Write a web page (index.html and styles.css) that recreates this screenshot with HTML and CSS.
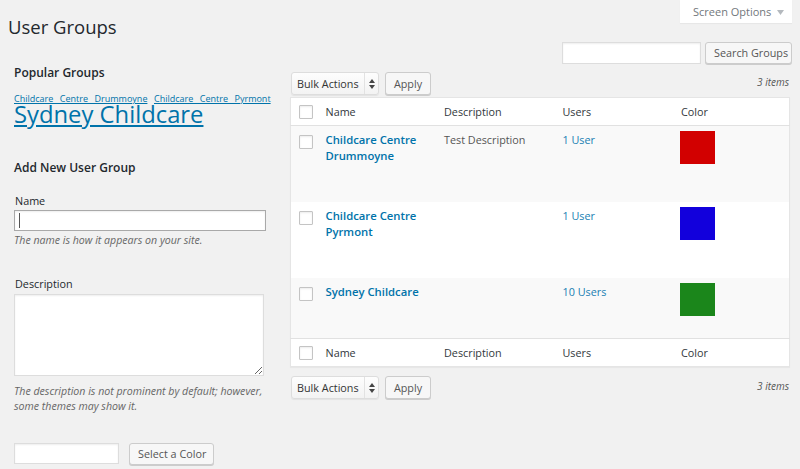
FILE: index.html
```html
<!DOCTYPE html>
<html>
<head>
<meta charset="utf-8">
<title>User Groups</title>
<link rel="stylesheet" href="styles.css">
</head>
<body>
<div class="wrap">
  <a class="screen-options">Screen Options <svg class="so-arrow" width="7" height="5" viewBox="0 0 7 5"><path d="M0 0h7L3.5 5z" fill="#b4b9be"/></svg></a>
  <h1 class="page-title">User Groups</h1>
  <div class="cols">
    <div class="col-left">
      <h2 class="section-title section-popular">Popular Groups</h2>
      <div class="tag-small"><a href="#">Childcare Centre Drummoyne</a> <a href="#">Childcare Centre Pyrmont</a></div>
      <a class="tag-big" href="#">Sydney Childcare</a>

      <h2 class="section-title section-add">Add New User Group</h2>
      <label class="field-label label-name">Name</label>
      <div class="input-wrap">
        <input class="text-input name-input" type="text">
        <span class="caret"></span>
      </div>
      <p class="help help-name">The name is how it appears on your site.</p>

      <label class="field-label label-desc">Description</label>
      <textarea class="desc-input"></textarea>
      <p class="help help-desc">The description is not prominent by default; however, some themes may show it.</p>

      <div class="color-row">
        <input class="text-input color-input" type="text">
        <button class="button">Select a Color</button>
      </div>
    </div>

    <div class="col-right">
      <div class="search-row">
        <input class="text-input search-input" type="text">
        <button class="button search-btn">Search Groups</button>
      </div>

      <div class="tablenav tablenav-top">
        <div class="select">
          <span class="select-label">Bulk Actions</span>
          <span class="select-arrows"><svg width="6" height="10" viewBox="0 0 6 10"><path d="M0 4L3 0l3 4z M0 6h6L3 10z" fill="#444"/></svg></span>
        </div>
        <button class="button apply-btn">Apply</button>
        <span class="items-count">3 items</span>
      </div>

      <table class="list-table">
        <colgroup>
          <col class="col-cb">
          <col><col><col><col>
        </colgroup>
        <thead>
          <tr>
            <th class="cb-cell"><span class="checkbox"></span></th>
            <th>Name</th>
            <th>Description</th>
            <th>Users</th>
            <th>Color</th>
          </tr>
        </thead>
        <tbody>
          <tr class="alt">
            <td class="cb-cell"><span class="checkbox"></span></td>
            <td><a class="row-title" href="#">Childcare Centre Drummoyne</a><div class="row-actions">Edit | Delete</div></td>
            <td class="desc-cell">Test Description</td>
            <td><a class="users-link" href="#">1 User</a></td>
            <td><span class="swatch" style="background:#d20000"></span></td>
          </tr>
          <tr>
            <td class="cb-cell"><span class="checkbox"></span></td>
            <td><a class="row-title" href="#">Childcare Centre Pyrmont</a><div class="row-actions">Edit | Delete</div></td>
            <td class="desc-cell"></td>
            <td><a class="users-link" href="#">1 User</a></td>
            <td><span class="swatch" style="background:#1200dc"></span></td>
          </tr>
          <tr class="alt">
            <td class="cb-cell"><span class="checkbox"></span></td>
            <td><a class="row-title" href="#">Sydney Childcare</a><div class="row-actions">Edit | Delete</div></td>
            <td class="desc-cell"></td>
            <td><a class="users-link" href="#">10 Users</a></td>
            <td><span class="swatch" style="background:#1b861b"></span></td>
          </tr>
        </tbody>
        <tfoot>
          <tr>
            <th class="cb-cell"><span class="checkbox"></span></th>
            <th>Name</th>
            <th>Description</th>
            <th>Users</th>
            <th>Color</th>
          </tr>
        </tfoot>
      </table>

      <div class="tablenav tablenav-bottom">
        <div class="select">
          <span class="select-label">Bulk Actions</span>
          <span class="select-arrows"><svg width="6" height="10" viewBox="0 0 6 10"><path d="M0 4L3 0l3 4z M0 6h6L3 10z" fill="#444"/></svg></span>
        </div>
        <button class="button apply-btn">Apply</button>
        <span class="items-count">3 items</span>
      </div>
    </div>
  </div>
</div>
</body>
</html>
```

FILE: styles.css
```css
* { box-sizing: border-box; }

html, body {
  margin: 0;
  padding: 0;
  background: #f1f1f1;
  font-family: "Open Sans", "Liberation Sans", sans-serif;
  font-size: 10.8px;
  color: #444;
}

.wrap {
  position: relative;
  padding-left: 8px;
  height: 469px;
  overflow: hidden;
}

/* Screen options tab */
.screen-options {
  position: absolute;
  top: 0;
  right: 8px;
  width: 112px;
  height: 23px;
  background: #fff;
  box-shadow: 0 1px 1px rgba(0,0,0,.04);
  color: #72777c;
  font-size: 11px;
  line-height: 23px;
  padding-left: 13px;
  display: flex;
  align-items: center;
  gap: 6px;
}
.so-arrow { margin-top: 1px; }

.page-title {
  margin: 0;
  padding-top: 15px;
  font-size: 18.5px;
  line-height: 24px;
  font-weight: 400;
  color: #23282d;
}

.cols {
  display: flex;
  margin-top: 3px;
}

.col-left {
  width: 282px;
  padding-left: 6px;
  display: flex;
  flex-direction: column;
  align-items: flex-start;
}

.col-right {
  width: 502px;
}

.section-title {
  margin: 0;
  font-size: 12px;
  line-height: 16px;
  font-weight: 600;
  color: #23282d;
}
.section-popular { margin-top: 23px; }
.section-add { margin-top: 36px; }

.tag-small {
  margin-top: 12px;
  font-size: 9px;
  line-height: 12px;
  word-spacing: 4.2px;
  white-space: nowrap;
}
.tag-small a, .tag-big { color: #0073aa; text-decoration: underline; }
.tag-big {
  display: block;
  font-size: 23.8px;
  line-height: 19px;
}

.field-label {
  display: block;
  line-height: 15px;
  padding-left: 1px;
  color: #23282d;
}
.label-name { margin-top: 17px; }
.label-desc { margin-top: 28px; }

.input-wrap {
  position: relative;
  margin-top: 2px;
}

.text-input {
  display: block;
  margin: 0;
  border: 1px solid #ddd;
  background: #fff;
  box-shadow: inset 0 1px 2px rgba(0,0,0,.07);
  font-family: inherit;
  font-size: 10.8px;
  padding: 0 4px;
  outline: none;
}

.name-input {
  width: 252px;
  height: 21px;
  border-color: #a9a9a9;
}
.caret {
  position: absolute;
  left: 5px;
  top: 3px;
  width: 1px;
  height: 15px;
  background: #555;
}

.help {
  margin: 0;
  font-style: italic;
  font-size: 10.6px;
  color: #666;
}
.help-name { margin-top: 2px; line-height: 15px; }
.help-desc { margin-top: 8px; line-height: 15.4px; width: 256px; }

.desc-input {
  display: block;
  margin-top: 3px;
  width: 250px;
  height: 82px;
  border: 1px solid #ddd;
  background: #fff;
  box-shadow: inset 0 1px 2px rgba(0,0,0,.07);
  resize: vertical;
  font-family: inherit;
}

.color-row {
  margin-top: 28px;
  display: flex;
  align-items: flex-start;
  gap: 10px;
}
.color-input { width: 105px; height: 21px; }

.button {
  margin: 0;
  height: 22px;
  padding: 0 8px;
  border: 1px solid #ccc;
  border-radius: 3px;
  background: #f7f7f7;
  box-shadow: 0 1px 0 #ccc;
  color: #555;
  font-family: inherit;
  font-size: 10.8px;
  line-height: 20px;
  white-space: nowrap;
}
.color-row .button { width: 85px; }

/* Right column */
.search-row {
  display: flex;
  justify-content: flex-end;
  gap: 4px;
  height: 22px;
}
.search-input { width: 139px; height: 22px; }
.search-btn { width: 87px; }

.tablenav {
  display: flex;
  align-items: center;
  height: 23px;
}
.tablenav-top { margin-top: 8px; margin-bottom: 2px; }
.tablenav-bottom { margin-top: 9px; }

.select {
  display: flex;
  align-items: stretch;
  width: 88px;
  height: 23px;
  margin-left: 1px;
  border: 1px solid #ddd;
  border-radius: 3px;
  background: linear-gradient(#fdfdfd, #f3f3f3);
  box-shadow: 0 1px 1px rgba(0,0,0,.06);
  color: #333;
}
.select-label {
  flex: 1;
  padding-left: 5px;
  line-height: 21px;
}
.select-arrows {
  width: 14px;
  border-left: 1px solid #e2e2e2;
  display: flex;
  align-items: center;
  justify-content: center;
}

.apply-btn {
  margin-left: 6px;
  width: 46px;
  height: 23px;
  padding: 0;
}

.items-count {
  margin-left: auto;
  padding-right: 3px;
  font-style: italic;
  font-size: 10px;
  color: #555;
  margin-top: -3px;
}

/* Table */
.list-table {
  width: 500px;
  table-layout: fixed;
  border-collapse: collapse;
  border: 1px solid #e5e5e5;
  background: #fff;
  box-shadow: 0 1px 1px rgba(0,0,0,.04);
}
.col-cb { width: 25px; }

.list-table th {
  height: 28px;
  padding: 0 10px;
  text-align: left;
  font-weight: 400;
  color: #32373c;
  vertical-align: middle;
}
.list-table thead th { border-bottom: 1px solid #e1e1e1; }
.list-table tfoot th { border-top: 1px solid #e1e1e1; }

.list-table td {
  padding: 6px 10px 8px;
  vertical-align: top;
  line-height: 16px;
}
.list-table tr.alt td { background: #f9f9f9; }

.list-table .cb-cell { padding: 0 0 0 8px; }
.list-table th.cb-cell { vertical-align: middle; }
.list-table td.cb-cell { padding-top: 9px; }

.checkbox {
  display: block;
  width: 14px;
  height: 14px;
  border: 1px solid #c4c4c4;
  border-radius: 1px;
  background: #fff;
  box-shadow: inset 0 1px 2px rgba(0,0,0,.08);
}

.row-title {
  color: #0073aa;
  font-weight: 600;
  font-size: 11.3px;
  text-decoration: none;
}
.row-actions {
  visibility: hidden;
  height: 30px;
}
.desc-cell { color: #555; }
.users-link { color: #1a7fb3; text-decoration: none; }

.swatch {
  display: block;
  width: 35px;
  height: 33px;
  margin-top: -1px;
  margin-left: -1px;
}
```
